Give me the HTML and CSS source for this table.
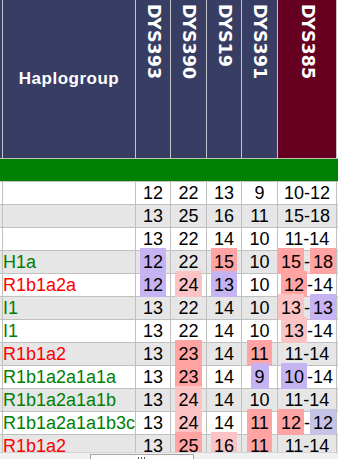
FILE: index.html
```html
<!DOCTYPE html>
<html>
<head>
<meta charset="utf-8">
<link rel="stylesheet" href="styles.css">
</head>
<body>
<div class="sheet">
<table class="grid">
<colgroup>
<col class="c-gap"><col class="c-hap"><col class="c-n35"><col class="c-n36"><col class="c-n35"><col class="c-n36"><col class="c-rng"><col class="c-tail">
</colgroup>
<thead>
<tr class="head">
<th class="h-gap"></th>
<th class="h-hap">Haplogroup</th>
<th class="h-dys"><span class="vt">DYS393</span></th>
<th class="h-dys"><span class="vt">DYS390</span></th>
<th class="h-dys"><span class="vt">DYS19</span></th>
<th class="h-dys"><span class="vt">DYS391</span></th>
<th class="h-dys h-key"><span class="vt">DYS385</span></th>
<th class="h-tail"></th>
</tr>
<tr class="band"><td colspan="8"></td></tr>
</thead>
<tbody>
<tr class="w"><td class="gap"></td><td class="hap"></td><td>12</td><td>22</td><td>13</td><td>9</td><td>10-12</td><td class="tail"></td></tr>
<tr class="g"><td class="gap"></td><td class="hap"></td><td>13</td><td>25</td><td>16</td><td>11</td><td>15-18</td><td class="tail"></td></tr>
<tr class="w"><td class="gap"></td><td class="hap"></td><td>13</td><td>22</td><td>14</td><td>10</td><td>11-14</td><td class="tail"></td></tr>
<tr class="g"><td class="gap"></td><td class="hap green">H1a</td><td><span class="hl pu">12</span></td><td>22</td><td><span class="hl pk">15</span></td><td>10</td><td><span class="hl pk">15</span>-<span class="hl pk">18</span></td><td class="tail"></td></tr>
<tr class="w"><td class="gap"></td><td class="hap red">R1b1a2a</td><td><span class="hl pu">12</span></td><td><span class="hl lp">24</span></td><td><span class="hl pu">13</span></td><td>10</td><td><span class="hl pk">12</span>-14</td><td class="tail"></td></tr>
<tr class="g"><td class="gap"></td><td class="hap green">I1</td><td>13</td><td>22</td><td>14</td><td>10</td><td><span class="hl lp">13</span>-<span class="hl pu">13</span></td><td class="tail"></td></tr>
<tr class="w"><td class="gap"></td><td class="hap green">I1</td><td>13</td><td>22</td><td>14</td><td>10</td><td><span class="hl lp">13</span>-14</td><td class="tail"></td></tr>
<tr class="g"><td class="gap"></td><td class="hap red">R1b1a2</td><td>13</td><td><span class="hl pk">23</span></td><td>14</td><td><span class="hl pk">11</span></td><td>11-14</td><td class="tail"></td></tr>
<tr class="w"><td class="gap"></td><td class="hap green">R1b1a2a1a1a</td><td>13</td><td><span class="hl pk">23</span></td><td>14</td><td><span class="hl pu">9</span></td><td><span class="hl pu">10</span>-14</td><td class="tail"></td></tr>
<tr class="g"><td class="gap"></td><td class="hap green">R1b1a2a1a1b</td><td>13</td><td><span class="hl lp">24</span></td><td>14</td><td>10</td><td>11-14</td><td class="tail"></td></tr>
<tr class="w"><td class="gap"></td><td class="hap green">R1b1a2a1a1b3c</td><td>13</td><td><span class="hl lp">24</span></td><td>14</td><td><span class="hl pk">11</span></td><td><span class="hl pk">12</span>-<span class="hl bl">12</span></td><td class="tail"></td></tr>
<tr class="g"><td class="gap"></td><td class="hap red">R1b1a2</td><td>13</td><td><span class="hl pk">25</span></td><td><span class="hl lp">16</span></td><td><span class="hl pk">11</span></td><td>11-14</td><td class="tail"></td></tr>
</tbody>
</table>
</div>
<div class="hscroll"><div class="thumb"><span class="grip"></span></div></div>
</body>
</html>
```
FILE: styles.css
```css
html, body {
  margin: 0;
  padding: 0;
  background: #ffffff;
}
body {
  font-family: "Liberation Sans", Arial, sans-serif;
  width: 338px;
  height: 459px;
  overflow: hidden;
}
.sheet {
  height: 452px;
  overflow: hidden;
}
.grid {
  border-collapse: separate;
  border-spacing: 0;
  table-layout: fixed;
  width: 338px;
}
.c-gap { width: 3px; }
.c-hap { width: 133px; }
.c-n35 { width: 35px; }
.c-n36 { width: 36px; }
.c-rng { width: 59px; }
.c-tail { width: 1px; }

.head { height: 159px; }
.head th {
  background: #383e63;
  color: #ffffff;
  border-right: 1px solid #c4c5cc;
  border-bottom: 1px solid #c0c0c0;
  padding: 0;
  font-weight: bold;
}
.head .h-key { background: #660020; }
.head .h-tail {
  background: #ffffff;
  border-right: 0;
}
.head .h-hap {
  font-size: 17px;
  letter-spacing: 0.5px;
  vertical-align: middle;
  text-align: center;
}
.head .h-dys {
  vertical-align: top;
  text-align: center;
  padding-top: 4px;
}
.vt {
  writing-mode: vertical-rl;
  font: bold 17.5px "DejaVu Sans", sans-serif;
  line-height: 1;
}

.band { height: 23px; }
.band td {
  background: #008000;
  border-bottom: 1px solid #c0c0c0;
  padding: 0;
}

tbody td {
  padding: 0;
  border-right: 1px solid #c0c0c0;
  border-bottom: 1px solid #c0c0c0;
  font-size: 18px;
  line-height: 22px;
  text-align: center;
  white-space: nowrap;
  color: #000000;
  background: #ffffff;
}
tbody tr.g td { background: #e6e6e6; }
tbody td.hap { text-align: left; }
tbody td.tail { border-right: 0; }
.green { color: #008000; }
.red { color: #ff0000; }

.hl {
  display: inline-block;
  vertical-align: top;
  box-sizing: border-box;
  height: 26px;
  min-width: 18px;
  margin: -3px 0 -1px;
  padding: 2px 3px 0;
  line-height: 24px;
}
.pu { background: #c6b3f2; }
.pk { background: #ffa3a3; }
.lp { background: #fcc3c5; }
.bl { background: #c6c4e6; }

.hscroll {
  box-sizing: border-box;
  height: 7px;
  border-top: 1px solid #d4d4d4;
  background: #f0f0f0;
  display: flex;
  padding: 1px 0 0 90px;
}
.thumb {
  box-sizing: border-box;
  width: 104px;
  border: 1px solid #a6a6a6;
  border-bottom: 0;
  background: #fbfbfb;
  display: flex;
  justify-content: center;
  padding-top: 2px;
}
.grip {
  width: 9px;
  height: 3px;
  background: repeating-linear-gradient(to right, #555555 0 1px, transparent 1px 3px);
}
```
